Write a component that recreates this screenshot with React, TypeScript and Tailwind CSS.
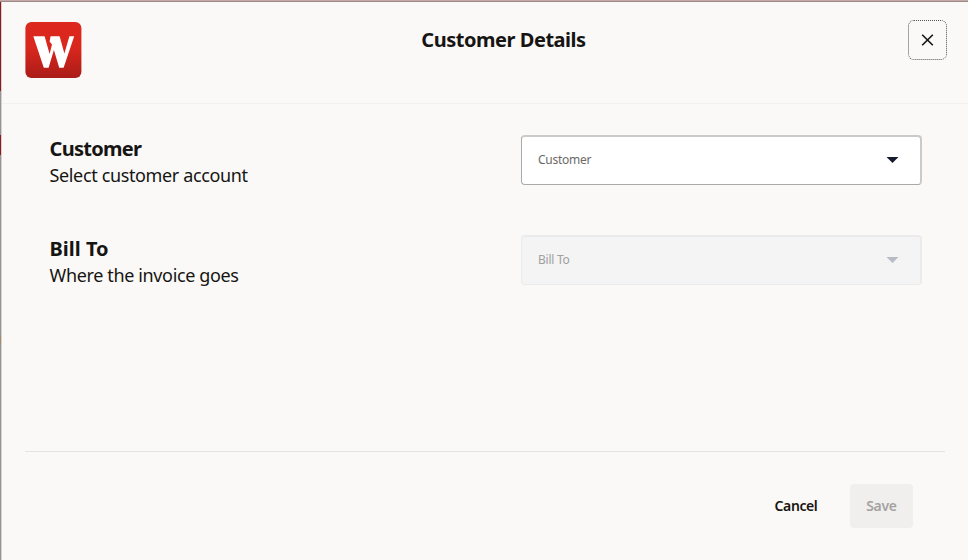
import React from "react";

function Logo() {
  return (
    <svg width="57" height="56" viewBox="0 0 57 56" className="block shrink-0" aria-label="W">
      <defs>
        <linearGradient id="logoRed" x1="0" y1="0" x2="0" y2="1">
          <stop offset="0" stopColor="#dc281e" />
          <stop offset="0.45" stopColor="#da271e" />
          <stop offset="1" stopColor="#aa1c18" />
        </linearGradient>
      </defs>
      <rect x="0.4" width="56" height="56" rx="6" fill="url(#logoRed)" />
      <path
        fill="#fff"
        d="M8.3 14.3H19.6L24.6 32L27 22.4L24.6 19.4L25.6 14.3H34.6L39.4 31.5L44.4 14.3H49.2L38.6 45.8H34.2L28.9 28L23.6 45.8H18.8Z"
      />
    </svg>
  );
}

type FieldProps = { title: string; hint: string; label: string; disabled?: boolean };

function FieldRow({ title, hint, label, disabled = false }: FieldProps) {
  return (
    <div className="flex h-[50px] items-start justify-between">
      <div className="pl-[0.5px] pt-px text-[#161513]">
        <h2
          className={
            disabled
              ? "h-[26px] text-[20px] font-bold leading-[26px] whitespace-nowrap"
              : "h-[26px] text-[20px] font-bold leading-[26px] tracking-[-0.7px] whitespace-nowrap"
          }
        >
          {title}
        </h2>
        <p className="h-[26px] text-[18px] leading-[26px] tracking-[-0.36px] whitespace-nowrap">{hint}</p>
      </div>
      <button
        type="button"
        disabled={disabled}
        className={
          disabled
            ? "flex h-[50px] w-[401px] items-center justify-between rounded-[4px] border border-t-2 border-r-2 border-[#e9ebed] bg-[#f4f4f4] pl-4 pr-[21px] pb-px text-[#a0a0a0]"
            : "flex h-[50px] w-[401px] items-center justify-between rounded-[4px] border border-t-2 border-r-2 border-t-[#cbcac9] border-r-[#cbcac9] border-b-[#aaa9a8] border-l-[#aaa9a8] bg-white pl-4 pr-[21px] pb-px text-[#6b6967]"
        }
      >
        <span className="text-[12px] leading-4 tracking-[-0.25px]">{label}</span>
        <svg width="13" height="6" viewBox="0 0 13 6" className={disabled ? "fill-[#b7bbc4]" : "fill-[#161b30]"}>
          <path d="M0.5 0H12.5L6.5 6Z" />
        </svg>
      </button>
    </div>
  );
}

export default function App() {
  return (
    <div className="flex h-[560px] w-[968px] flex-col overflow-hidden bg-[#faf9f7] font-['Noto_Sans','Open_Sans',sans-serif]">
      <div className="h-px shrink-0 bg-[#c3a9a7]" />
      <div className="h-px shrink-0 bg-[#9c8887]" />
      <div className="flex min-h-0 flex-1">
        <div className="flex w-px shrink-0 flex-col bg-[#969492]">
          <div className="h-[89px] bg-[#90191d]" />
          <div className="mt-[44px] h-[20px] bg-[#90191d]" />
          <div className="mt-[180px] h-[8px] bg-[#a68a62]" />
        </div>
        <div className="w-px shrink-0 bg-[#d5d3d1]" />
        <main className="flex flex-1 flex-col">
          <header className="flex h-[102px] shrink-0 items-start justify-between border-b border-[#f2f1ef] pl-[23px] pr-[21px]">
            <div className="w-[57px] pt-[20px]">
              <Logo />
            </div>
            <h1 className="pt-[25px] pl-[17px] text-[20px] font-bold leading-[26px] text-[#161513]">
              <span className="whitespace-nowrap tracking-[-0.47px]">Customer Details</span>
            </h1>
            <button
              type="button"
              aria-label="Close"
              className="mt-[18px] flex h-[40px] w-[39px] items-center justify-center rounded-[6px] border border-dotted border-[#55524f]"
            >
              <svg width="13" height="12" viewBox="0 0 13 12" fill="none" stroke="#161513" strokeWidth="1.6">
                <path d="M1.2 0.7L11.8 11.3M11.8 0.7L1.2 11.3" />
              </svg>
            </button>
          </header>
          <section className="flex h-[347px] shrink-0 flex-col gap-[50px] pl-[47px] pr-[46px] pt-[31px]">
            <FieldRow title="Customer" hint="Select customer account" label="Customer" />
            <FieldRow title="Bill To" hint="Where the invoice goes" label="Bill To" disabled />
          </section>
          <footer className="ml-[23px] mr-[23px] flex items-start justify-end border-t border-[#e4e3e1] pr-[32px] pt-[32px] text-[14px] font-semibold">
            <button type="button" className="flex h-[44px] w-[76px] items-center justify-center pb-[2px] text-[#161513]">
              <span className="tracking-[-0.4px]">Cancel</span>
            </button>
            <button
              type="button"
              disabled
              className="ml-4 flex h-[44px] w-[63px] items-center justify-center rounded-[4px] bg-[#f0efed] pb-[2px] text-[#a4a3a1]"
            >
              <span className="tracking-[-0.3px]">Save</span>
            </button>
          </footer>
        </main>
      </div>
    </div>
  );
}
